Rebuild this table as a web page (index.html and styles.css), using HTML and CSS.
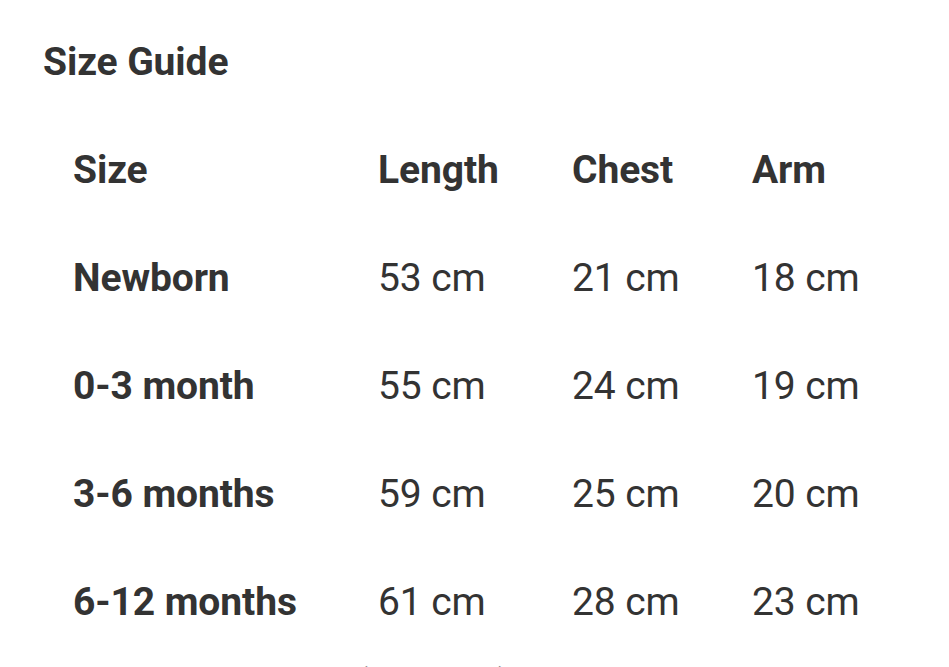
FILE: index.html
```html
<!DOCTYPE html>
<html lang="en">
<head>
<meta charset="utf-8">
<title>Size Guide</title>
<link rel="stylesheet" href="styles.css">
</head>
<body>
<main class="guide">
  <h2 class="guide-title">Size Guide</h2>
  <div class="size-table">
    <div class="cell head">Size</div>
    <div class="cell head">Length</div>
    <div class="cell head">Chest</div>
    <div class="cell head">Arm</div>

    <div class="cell label">Newborn</div>
    <div class="cell">53 cm</div>
    <div class="cell">21 cm</div>
    <div class="cell">18 cm</div>

    <div class="cell label">0-3 month</div>
    <div class="cell">55 cm</div>
    <div class="cell">24 cm</div>
    <div class="cell">19 cm</div>

    <div class="cell label">3-6 months</div>
    <div class="cell">59 cm</div>
    <div class="cell">25 cm</div>
    <div class="cell">20 cm</div>

    <div class="cell label">6-12 months</div>
    <div class="cell">61 cm</div>
    <div class="cell">28 cm</div>
    <div class="cell">23 cm</div>
  </div>
  <p class="note">(approx.)</p>
</main>
</body>
</html>
```
FILE: styles.css
```css
html, body {
  margin: 0;
  padding: 0;
  background: #ffffff;
  overflow: hidden;
}

body {
  font-family: Roboto, "Liberation Sans", Arial, sans-serif;
  color: #333333;
}

.guide {
  padding-left: 43px;
}

.guide-title {
  margin: 0;
  padding-top: 37px;
  font-size: 39px;
  line-height: 50px;
  font-weight: 700;
  letter-spacing: -0.1px;
}

.size-table {
  margin-top: 29px;
  margin-left: 30px;
  display: grid;
  grid-template-columns: 305px 194px 180px auto;
}

.cell {
  font-size: 39px;
  line-height: 108px;
  font-weight: 400;
  white-space: nowrap;
  letter-spacing: -0.1px;
}

.cell.head,
.cell.label {
  font-weight: 700;
}

.note {
  margin: 3px 0 0 312px;
  font-size: 39px;
  line-height: 50px;
  color: #888888;
}
```
